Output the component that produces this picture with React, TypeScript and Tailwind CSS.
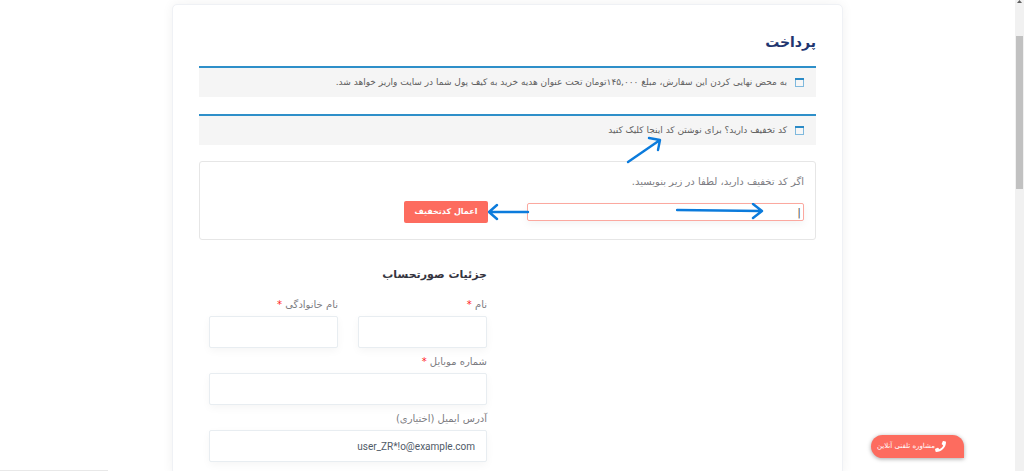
import type { ReactNode } from "react";
import { FaPhone } from "react-icons/fa";

function WindowIcon() {
  return (
    <svg viewBox="0 0 9 10" className="h-[10px] w-[9px] shrink-0" aria-hidden="true">
      <rect x="0.5" y="0.5" width="8" height="8" fill="#f6f6f6" stroke="#7fb9dd" />
      <rect x="0" y="0" width="9" height="2" fill="#2a8ac6" />
    </svg>
  );
}

function Notice({ children }: { children: ReactNode }) {
  return (
    <div className="flex h-[31px] items-center gap-2 border-t-2 border-[#2e8fc9] bg-[#f5f5f5] px-3 text-[9px] text-[#606060]">
      <WindowIcon />
      <p>{children}</p>
    </div>
  );
}

type FieldProps = { id: string; label: string; type: string; required?: boolean; value?: string };

function Field({ id, label, type, required, value }: FieldProps) {
  return (
    <div className="flex min-w-0 flex-1 flex-col">
      <label htmlFor={id} className="h-[21px] text-[10px] leading-[20px] text-[#7c7c82]">
        {label}
        {required && <span className="text-[#f22]"> *</span>}
      </label>
      <input
        id={id}
        type={type}
        defaultValue={value}
        dir="ltr"
        className="h-8 w-full rounded-[2px] border border-[#e8edf1] bg-white px-[11px] text-right font-['Roboto',sans-serif] text-[10px] text-[#4f5a67] shadow-[0_3px_8px_rgba(0,0,0,0.04)] outline-none"
      />
    </div>
  );
}

function Arrow({ className, viewBox, d }: { className: string; viewBox: string; d: string }) {
  return (
    <svg
      className={`pointer-events-none absolute ${className}`}
      viewBox={viewBox}
      fill="none"
      stroke="#0b7bdc"
      strokeWidth="2.4"
      strokeLinecap="round"
      strokeLinejoin="round"
      aria-hidden="true"
    >
      <path d={d} />
    </svg>
  );
}

export default function App() {
  return (
    <div className="relative flex h-screen overflow-hidden bg-white font-['DejaVu_Sans',sans-serif]">
      <main dir="rtl" className="min-w-0 flex-1 overflow-hidden px-[172px] pt-1">
        <section className="min-h-screen rounded-[5px] border border-[#eff1f5] bg-white px-[26px] pt-6 shadow-[0_0_12px_rgba(0,0,0,0.06)]">
          <h1 className="h-[37px] text-[14px] leading-[26px] font-bold text-[#22356f]">پرداخت</h1>
          <Notice>
            به محض نهایی کردن این سفارش، مبلغ ۱۴۵,۰۰۰تومان تحت عنوان هدیه خرید به کیف پول شما در سایت واریز خواهد شد.
          </Notice>
          <div className="relative mt-[17px]">
            <Notice>
              کد تخفیف دارید؟ برای نوشتن کد <a href="#coupon">اینجا کلیک کنید</a>
            </Notice>
            <Arrow
              className="top-[22px] left-[427px] h-[28px] w-[36px]"
              viewBox="0 0 36 28"
              d="M2 26 34 4M23 2 34 4 32 14"
            />
          </div>
          <form
            className="mt-4 h-[79px] rounded-[3px] border border-[#e6e6e6] px-[11px] pt-3"
            onSubmit={(e) => e.preventDefault()}
          >
            <label htmlFor="coupon" className="block h-[27px] text-[10px] leading-[16px] text-[#7c7c82]">
              اگر کد تخفیف دارید، لطفا در زیر بنویسید.
            </label>
            <div className="relative flex items-center gap-[39px]">
              <div className="relative w-[277px]">
                <input
                  id="coupon"
                  type="text"
                  defaultValue="|"
                  className="block h-[18px] w-full rounded-[2px] border border-[#fba89f] bg-white px-[2px] text-[11px] text-[#555] shadow-[0_3px_8px_rgba(0,0,0,0.05)] outline-none"
                />
                <Arrow
                  className="top-0 left-[149px] h-[18px] w-[88px]"
                  viewBox="0 0 88 18"
                  d="M1 7 85 8M77 1 86 8 77 15"
                />
              </div>
              <div className="relative">
                <button
                  type="submit"
                  className="block h-[22px] w-[84px] rounded-[2px] bg-[#fd6c5f] text-[8px] font-bold whitespace-nowrap text-white"
                >
                  اعمال کدتخفیف
                </button>
                <Arrow
                  className="top-[2px] left-[84px] h-[18px] w-[42px]"
                  viewBox="0 0 42 18"
                  d="M40 9 1 9M9 2 1 9 9 16"
                />
              </div>
            </div>
          </form>
          <form className="mr-auto mt-6 flex w-[298px] flex-col px-[10px]" onSubmit={(e) => e.preventDefault()}>
            <h2 className="h-[31px] text-[11px] leading-[22px] font-bold text-[#35353f]">جزئیات صورتحساب</h2>
            <div className="flex flex-col gap-1">
              <div className="flex gap-5">
                <Field id="first-name" label="نام" type="text" required />
                <Field id="last-name" label="نام خانوادگی" type="text" required />
              </div>
              <Field id="mobile" label="شماره موبایل" type="tel" required />
              <Field id="email" label="آدرس ایمیل (اختیاری)" type="text" value="user_ZR*!o@example.com" />
            </div>
          </form>
        </section>
      </main>
      <div className="flex w-[9px] shrink-0 flex-col items-center bg-[#f1f1f1]" aria-hidden="true">
        <svg viewBox="0 0 9 36" className="h-9 w-[9px]">
          <path d="M2 3 4.5 0 7 3Z" fill="#606060" />
        </svg>
        <div className="h-[153px] w-[7px] bg-[#c1c1c1]" />
      </div>
      <button
        type="button"
        dir="rtl"
        className="absolute right-[60px] bottom-[13px] flex h-[23px] w-[93px] items-center rounded-full rounded-br-none bg-[#fd6c5f] pr-[18px] text-[7px] whitespace-nowrap text-white shadow-[0_1px_4px_rgba(0,0,0,0.35)]"
      >
        <FaPhone className="size-[11px] shrink-0" />
        مشاوره تلفنی آنلاین
      </button>
      <div className="absolute bottom-0 left-0 h-px w-[108px] bg-[#e8e8e8]" aria-hidden="true" />
    </div>
  );
}
